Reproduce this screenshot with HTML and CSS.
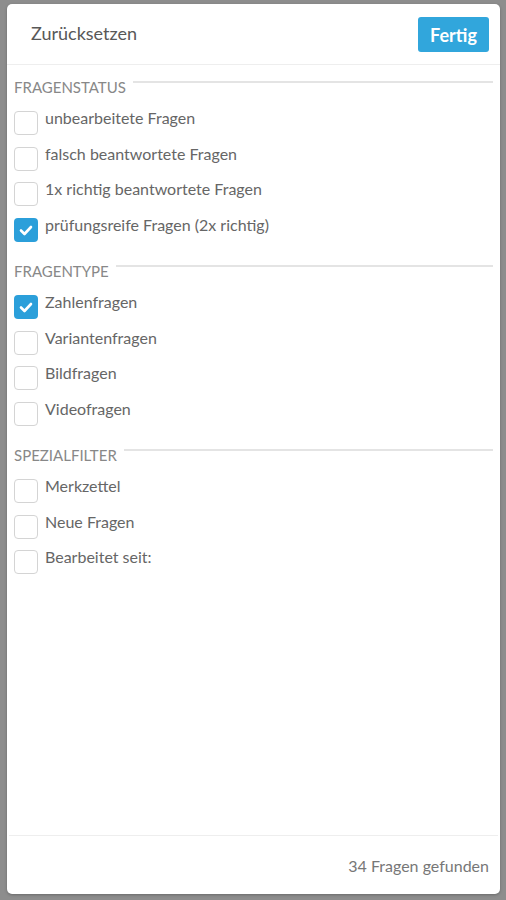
FILE: index.html
```html
<!DOCTYPE html>
<html lang="de">
<head>
    <meta charset="UTF-8">
    <meta name="viewport" content="width=device-width, initial-scale=1.0">
    <title>Filter</title>
    <link rel="stylesheet" href="styles.css">
</head>
<body>
    <div class="panel">
        <!-- Kopfzeile -->
        <div class="panel-head">
            <span class="reset">Zurücksetzen</span>
            <button class="done">Fertig</button>
        </div>

        <div class="panel-body">
            <div class="section">
                <div class="section-title"><span>FRAGENSTATUS</span></div>
                <label class="row"><span class="box"></span>unbearbeitete Fragen</label>
                <label class="row"><span class="box"></span>falsch beantwortete Fragen</label>
                <label class="row"><span class="box"></span>1x richtig beantwortete Fragen</label>
                <label class="row"><span class="box checked"><svg viewBox="0 0 24 24"><polyline points="7,12.5 10.5,16 17,9"/></svg></span>prüfungsreife Fragen (2x richtig)</label>
            </div>

            <div class="section">
                <div class="section-title"><span>FRAGENTYPE</span></div>
                <label class="row"><span class="box checked"><svg viewBox="0 0 24 24"><polyline points="7,12.5 10.5,16 17,9"/></svg></span>Zahlenfragen</label>
                <label class="row"><span class="box"></span>Variantenfragen</label>
                <label class="row"><span class="box"></span>Bildfragen</label>
                <label class="row"><span class="box"></span>Videofragen</label>
            </div>

            <div class="section">
                <div class="section-title"><span>SPEZIALFILTER</span></div>
                <label class="row"><span class="box"></span>Merkzettel</label>
                <label class="row"><span class="box"></span>Neue Fragen</label>
                <label class="row"><span class="box"></span>Bearbeitet seit:</label>
            </div>
        </div>

        <!-- Fusszeile -->
        <div class="panel-foot">34 Fragen gefunden</div>
    </div>
</body>
</html>
```

FILE: styles.css
```css
body {
    margin: 0;
    background-color: #8d8d8d;
    font-family: Lato, "Noto Sans", sans-serif;
    padding: 4px 6px 6px 7px;
}
.panel {
    height: 890px;
    background: #fff;
    border-radius: 5px;
    box-shadow: 0 1px 3px rgba(0, 0, 0, 0.25);
    display: flex;
    flex-direction: column;
}
.panel-head {
    height: 60px;
    display: flex;
    align-items: center;
    justify-content: space-between;
    padding: 0 11px 0 24px;
    border-bottom: 1px solid #eeeeee;
}
.reset {
    font-size: 18px;
    color: #585858;
    margin-top: -2px;
}
.done {
    width: 71px;
    height: 35px;
    background-color: #31a6dc;
    color: #fff;
    border: none;
    border-radius: 3px;
    font-family: inherit;
    font-size: 18px;
    font-weight: bold;
    padding: 0;
    margin-top: 1px;
}
.panel-body {
    flex: 1;
    padding: 13px 7px 0 7px;
}
.section {
    height: 184px;
}
.section-title {
    display: flex;
    align-items: flex-start;
    height: 18px;
    line-height: 18px;
    font-size: 15px;
    color: #888;
    margin-bottom: 12px;
}
.section-title::after {
    content: "";
    flex: 1;
    height: 2px;
    background-color: #e4e4e4;
    margin: 3px 0 0 7px;
}
.row {
    display: flex;
    align-items: flex-start;
    height: 35.6px;
    font-size: 16px;
    line-height: 20px;
    color: #666;
}
.box {
    width: 22px;
    height: 22px;
    border: 1px solid #d4d4d4;
    border-radius: 4px;
    margin: 3px 7px 0 0;
    flex-shrink: 0;
}
.box.checked {
    width: 24px;
    height: 24px;
    border: none;
    background-color: #2b9fda;
}
.box svg {
    display: block;
    width: 24px;
    height: 24px;
    fill: none;
    stroke: #fff;
    stroke-width: 2.6;
    stroke-linecap: round;
    stroke-linejoin: round;
}
.panel-foot {
    height: 58px;
    margin: 0 2px;
    padding-right: 9px;
    border-top: 1px solid #eeeeee;
    display: flex;
    align-items: center;
    justify-content: flex-end;
    font-size: 16px;
    color: #777;
}
```
